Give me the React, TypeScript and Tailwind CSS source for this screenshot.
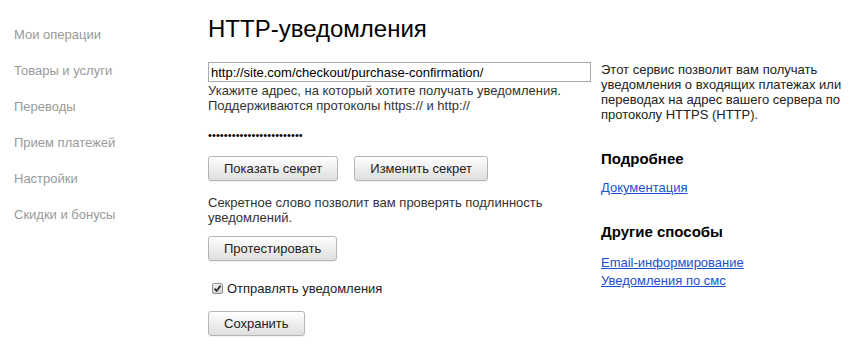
import React from "react";

const font = { fontFamily: '"Liberation Sans", Arial, sans-serif' };

function Btn({ children }: { children: React.ReactNode }) {
  return (
    <button
      type="button"
      className="h-[25px] px-[15px] border border-[#b5b5b5] rounded-[3px] bg-gradient-to-b from-[#ffffff] to-[#dedede] text-[13px] leading-[15px] text-[#222] shadow-[0_1px_0_rgba(0,0,0,0.05)]"
    >
      {children}
    </button>
  );
}

export default function App() {
  const side = [
    "Мои операции",
    "Товары и услуги",
    "Переводы",
    "Прием платежей",
    "Настройки",
    "Скидки и бонусы",
  ];
  return (
    <div className="w-[868px] h-[354px] bg-white flex items-start overflow-hidden" style={font}>
      <div className="w-[208px] pl-[14px] pt-[27px] flex flex-col gap-[21px] shrink-0">
        {side.map((s) => (
          <div key={s} className="text-[13px] leading-[15px] text-[#999]">
            {s}
          </div>
        ))}
      </div>

      <div className="w-[383px] shrink-0 flex flex-col items-start">
        <h1 className="mt-[15px] text-[24px] leading-[28px] text-black font-normal">HTTP-уведомления</h1>
        <input
          readOnly
          value="http://site.com/checkout/purchase-confirmation/"
          className="mt-[19px] w-[383px] h-[20px] border border-[#aaa] pl-[2px] text-[13px] text-black outline-none"
          style={font}
        />
        <div className="mt-[1px] text-[13px] leading-[15px] text-[#333]">
          Укажите адрес, на который хотите получать уведомления.
          <br />
          Поддерживаются протоколы https:// и http://
        </div>
        <div className="mt-[16px] h-[13px] text-[11px] leading-[13px] text-black tracking-[0.1px]">
          ••••••••••••••••••••••••
        </div>
        <div className="mt-[14px] flex gap-[16px]">
          <Btn>Показать секрет</Btn>
          <Btn>Изменить секрет</Btn>
        </div>
        <div className="mt-[14px] text-[13px] leading-[15px] text-[#333]">
          Секретное слово позволит вам проверять подлинность
          <br />
          уведомлений.
        </div>
        <div className="mt-[11px]">
          <Btn>Протестировать</Btn>
        </div>
        <label className="mt-[20px] flex items-center text-[13px] leading-[15px] text-[#222]">
          <span className="ml-[4px] mr-[4px] w-[11px] h-[11px] border border-[#8f8f8f] rounded-[2px] bg-gradient-to-b from-[#f4f4f4] to-[#d4d4d4] flex items-center justify-center">
            <svg width="9" height="9" viewBox="0 0 9 9">
              <path d="M1.5 4.6 L3.6 6.8 L7.6 1.6" fill="none" stroke="#333" strokeWidth="1.8" />
            </svg>
          </span>
          Отправлять уведомления
        </label>
        <div className="mt-[15px]">
          <Btn>Сохранить</Btn>
        </div>
      </div>

      <div className="ml-[10px] mt-[62px] w-[245px] flex flex-col items-start">
        <p className="text-[13px] leading-[15px] text-[#222]">
          Этот сервис позволит вам получать уведомления о входящих платежах или переводах на адрес вашего сервера по
          протоколу HTTPS (HTTP).
        </p>
        <h2 className="mt-[28px] text-[15px] leading-[18px] font-bold text-black">Подробнее</h2>
        <a href="#" className="mt-[12px] text-[13px] leading-[15px] text-[#1a4fcf] underline">
          Документация
        </a>
        <h2 className="mt-[28px] text-[15px] leading-[18px] font-bold text-black">Другие способы</h2>
        <a href="#" className="mt-[14px] text-[13px] leading-[15px] text-[#1a4fcf] underline">
          Email-информирование
        </a>
        <a href="#" className="mt-[3px] text-[13px] leading-[15px] text-[#1a4fcf] underline">
          Уведомления по смс
        </a>
      </div>
    </div>
  );
}
